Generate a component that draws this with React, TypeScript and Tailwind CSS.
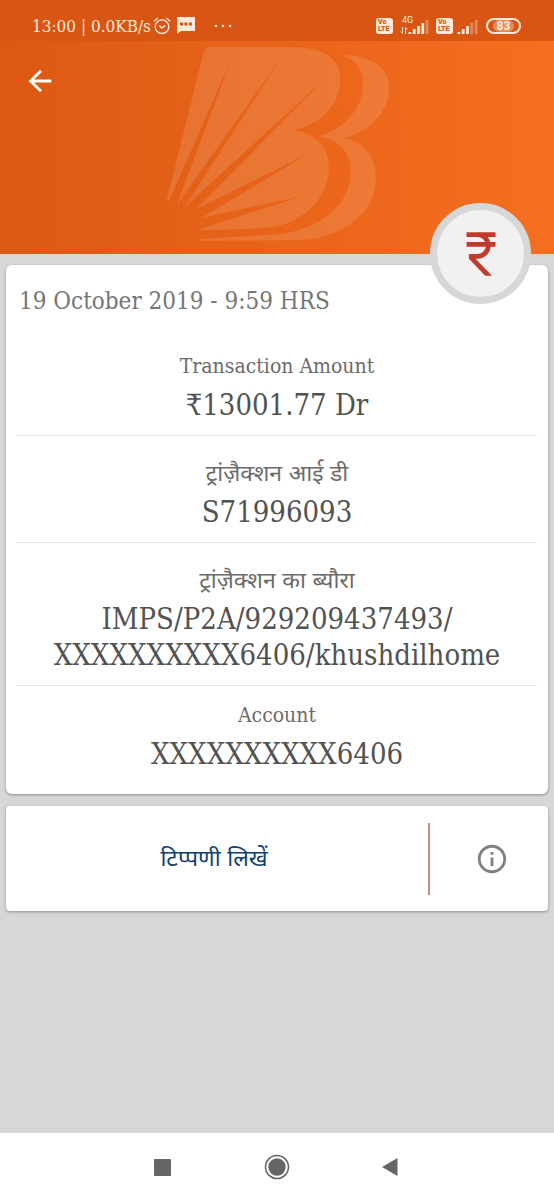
import type { ReactNode } from 'react';
import { MdArrowBack, MdCurrencyRupee, MdInfoOutline } from 'react-icons/md';

interface Detail {
  label: string;
  value: string[];
  hindi?: boolean;
}

const details: Detail[] = [
  { label: 'Transaction Amount', value: ['₹13001.77 Dr'] },
  { label: 'ट्रांज़ैक्शन आई डी', value: ['S71996093'], hindi: true },
  {
    label: 'ट्रांज़ैक्शन का ब्यौरा',
    value: ['IMPS/P2A/929209437493/', 'XXXXXXXXXX6406/khushdilhome'],
    hindi: true,
  },
  { label: 'Account', value: ['XXXXXXXXXX6406'] },
];

export default function App() {
  return (
    <div className="flex min-h-screen flex-col bg-[#d7d7d7] font-['DejaVu_Serif_Condensed','DejaVu_Serif','Noto_Sans',serif]">
      <StatusBar />
      <Header />

      <main className="flex-1 px-1.5 pt-[11px]">
        <section className="relative rounded-md bg-white px-[11px] pt-5 pb-[22px] shadow-[0_1px_3px_rgba(0,0,0,0.35)]">
          <RupeeBadge />
          <h1 className="pl-0.5 text-2xl leading-8 text-[#767676]">
            19 October 2019 - 9:59 HRS
          </h1>
          <dl className="mt-5">
            {details.map((detail) => (
              <DetailRow key={detail.label} detail={detail} />
            ))}
          </dl>
        </section>

        <section className="mt-3 flex h-[105px] items-center rounded-sm bg-white shadow-[0_1px_3px_rgba(0,0,0,0.35)]">
          <button className="h-full flex-1 text-[23px] text-[#12406f]">
            टिप्पणी लिखें
          </button>
          <span className="mx-1.5 h-[72px] w-0.5 bg-[#c98d75]" />
          <button
            aria-label="Info"
            className="flex h-full w-28 items-center justify-center text-[#808080]"
          >
            <MdInfoOutline size={34} />
          </button>
        </section>
      </main>

      <NavigationBar />
    </div>
  );
}

function StatusBar() {
  return (
    <div className="flex h-[41px] items-center justify-between bg-[#d95513] pt-2.5 pr-[33px] pl-8 text-[#ffeadb]">
      <div className="flex items-center">
        <span className="text-[17px] leading-6 whitespace-nowrap">13:00 | 0.0KB/s</span>
        <svg className="ml-0.5" width="18" height="18" viewBox="0 0 18 18" fill="none" stroke="currentColor" strokeWidth="1.4">
          <circle cx="9" cy="9.7" r="6.8" />
          <path d="M.8 4.2 4.8 1M17.2 4.2 13.2 1M6.2 8.6 9 11l3.2-2.6" />
        </svg>
        <svg className="ml-1.5" width="18" height="17" viewBox="0 0 18 17">
          <path d="M0 0h18v14H4l-4 3z" fill="currentColor" />
          <path d="M3 5.5h3v3H3zM7.5 5.5h3v3h-3zM12 5.5h3v3h-3z" fill="#d95513" />
        </svg>
        <svg className="ml-[18px]" width="20" height="4" viewBox="0 0 20 4" fill="currentColor">
          <circle cx="3" cy="2" r="1.3" />
          <circle cx="10" cy="2" r="1.3" />
          <circle cx="17" cy="2" r="1.3" />
        </svg>
      </div>
      <div className="flex items-center">
        <Volte />
        <div className="relative ml-[7px] flex h-4 items-end">
          <span className="absolute -top-0.5 left-0.5 font-['Roboto',sans-serif] text-[9px] leading-[9px]">
            4G
          </span>
          <svg width="8" height="7" viewBox="0 0 8 7" fill="none" stroke="currentColor" strokeWidth="1">
            <path d="M2.5 0v6M.5 4.5l2 2M5.5 7V1M7.5 2.5l-2-2" />
          </svg>
          <Signal strength={4} />
        </div>
        <span className="ml-[7px]">
          <Volte />
        </span>
        <div className="ml-1 flex h-4 items-end">
          <Signal strength={3} />
        </div>
        <span className="ml-2 flex h-4 w-[35px] items-center justify-center rounded-full border-2 border-current font-['Roboto',sans-serif] text-xs leading-3 font-bold text-[#ffeadb]">
          <span className="rounded-full bg-[#e98a5a] px-1">83</span>
        </span>
      </div>
    </div>
  );
}

function Volte() {
  return (
    <span className="flex h-4 w-[17px] flex-col justify-center rounded-[3px] bg-[#ffeadb] pl-0.5 font-['Roboto',sans-serif] text-[7px] leading-[7px] font-black text-[#d95513]">
      <span>Vo</span>
      <span>LTE</span>
    </span>
  );
}

function Signal({ strength }: { strength: number }) {
  return (
    <svg width="21" height="15" viewBox="0 0 21 15" fill="currentColor">
      {[2, 5, 8, 11, 14].map((height, index) => (
        <rect
          key={height}
          x={index * 4.3 + 0.5}
          y={15 - height}
          width="2.8"
          height={height}
          opacity={index < strength ? 1 : 0.35}
        />
      ))}
    </svg>
  );
}

function Header() {
  return (
    <header className="grid h-[213px] grid-cols-[1fr_auto_1fr] items-start bg-linear-to-r from-[#dc5913] to-[#f56f20]">
      <button aria-label="Back" className="mt-5 ml-5 flex size-10 items-center justify-center text-white">
        <MdArrowBack size={34} />
      </button>
      <BankLogo />
    </header>
  );
}

function BankLogo() {
  return (
    <svg className="mt-1" width="225" height="197" viewBox="75 15 675 592" fill="#fff" fillOpacity="0.12" aria-hidden="true">
      <mask id="rays" maskUnits="userSpaceOnUse" x="75" y="15" width="675" height="592">
        <rect x="75" y="15" width="675" height="592" fill="#fff" fillOpacity="1" />
        <g fill="#000" fillOpacity="1">
          <path d="M276 52 88 480 70 590 112 490z" />
          <path d="M427 48 118 484 70 590 136 498z" />
          <path d="M559 113 142 494 70 590 157 519z" />
          <path d="M508 339 160 513 70 590 170 543z" />
          <path d="M494 467 174 537 70 590 178 568z" />
          <circle cx="70" cy="590" r="107" />
        </g>
      </mask>
      <path
        mask="url(#rays)"
        d="M207 20 460 22C550 22 601 55 601 118 601 190 552 249 463 271 530 282 567 325 567 384 567 475 490 545 402 562Q370 567 176 572L78 488 190 38Q194 21 207 20Z"
      />
      <path d="M600 45C690 45 748 80 748 142 748 215 691 277 611 295 674 305 708 353 708 415 708 515 620 592 480 602L175 603V598L400 585C530 575 633 500 633 395 633 340 600 300 536 290 620 265 670 200 670 130 670 85 648 58 600 45Z" />
    </svg>
  );
}

function RupeeBadge() {
  return (
    <div className="absolute -top-[62px] right-[17px] flex size-[101px] items-center justify-center rounded-full border-[7px] border-[#d7d7d7] bg-[#f1f1f1] text-[#c23a2b]">
      <MdCurrencyRupee size={58} />
    </div>
  );
}

function DetailRow({ detail }: { detail: Detail }) {
  return (
    <div
      className={`border-b border-[#e6e6e6] pb-3 text-center last:border-b-0 last:pb-0 ${
        detail.hindi ? 'pt-5' : 'pt-3'
      }`}
    >
      <dt
        className={`leading-[34px] text-[#6b6b6b] ${
          detail.hindi ? 'text-[23px]' : 'text-[21px]'
        }`}
      >
        {detail.label}
      </dt>
      <dd className="mt-1 text-[29px] leading-9 text-[#525252]">
        {detail.value.map((line) => (
          <span key={line} className="block">
            {line}
          </span>
        ))}
      </dd>
    </div>
  );
}

function NavigationBar() {
  return (
    <nav className="flex h-[67px] items-center justify-center gap-[90px] bg-white text-[#666]">
      <NavButton label="Recent apps">
        <rect x="3" y="4" width="17" height="17" rx="1" />
      </NavButton>
      <NavButton label="Home">
        <circle cx="12" cy="12" r="11.5" fill="none" stroke="currentColor" strokeWidth="1.6" />
        <circle cx="12" cy="12" r="8.7" />
      </NavButton>
      <NavButton label="Back">
        <path d="M3 12 18.500 3v18z" />
      </NavButton>
    </nav>
  );
}

function NavButton({ label, children }: { label: string; children: ReactNode }) {
  return (
    <button aria-label={label}>
      <svg className="overflow-visible" width="24" height="24" viewBox="0 0 24 24" fill="currentColor">
        {children}
      </svg>
    </button>
  );
}
